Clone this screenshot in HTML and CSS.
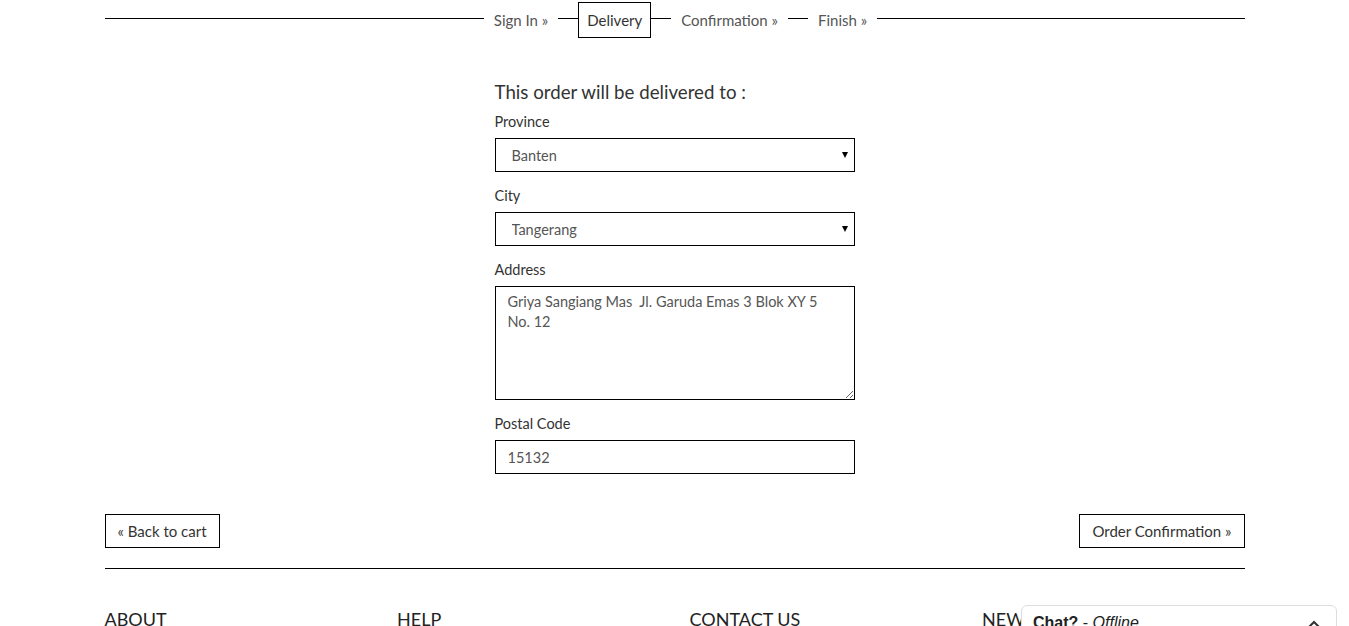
FILE: index.html
```html
<!DOCTYPE html>
<html lang="en">
<head>
    <meta charset="UTF-8">
    <meta name="viewport" content="width=device-width, initial-scale=1.0">
    <title>Checkout - Delivery</title>
    <link rel="stylesheet" href="styles.css">
</head>
<body>

<div class="container">
    <div class="steps">
        <span class="step-line"></span>
        <span class="step">Sign In &raquo;</span>
        <span class="step-line short"></span>
        <span class="step active">Delivery</span>
        <span class="step-line short"></span>
        <span class="step">Confirmation &raquo;</span>
        <span class="step-line short"></span>
        <span class="step">Finish &raquo;</span>
        <span class="step-line"></span>
    </div>

    <form class="delivery-form">
        <h3>This order will be delivered to :</h3>

        <label for="province">Province</label>
        <div class="select-wrap">
            <select id="province">
                <option>Banten</option>
            </select>
        </div>

        <label for="city">City</label>
        <div class="select-wrap">
            <select id="city">
                <option>Tangerang</option>
            </select>
        </div>

        <label for="address">Address</label>
        <textarea id="address" spellcheck="false">Griya Sangiang Mas  Jl. Garuda Emas 3 Blok XY 5 No. 12</textarea>

        <label for="postal">Postal Code</label>
        <input type="text" id="postal" value="15132">
    </form>

    <div class="actions">
        <button type="button" class="btn">&laquo; Back to cart</button>
        <button type="button" class="btn">Order Confirmation &raquo;</button>
    </div>

    <hr>

    <div class="footer">
        <h4>ABOUT</h4>
        <h4>HELP</h4>
        <h4>CONTACT US</h4>
        <h4>NEWSLETTER</h4>
    </div>
</div>

<div class="chat">
    <span><b>Chat?</b> - <i>Offline</i></span>
    <svg width="12" height="8" viewBox="0 0 12 8"><path d="M1 7 L6 2 L11 7" fill="none" stroke="#333" stroke-width="2"/></svg>
</div>

</body>
</html>
```

FILE: styles.css
```css
body {
    margin: 0;
    font-family: Lato, "Open Sans", sans-serif;
    color: #333;
    background: #fff;
    height: 626px;
    overflow: hidden;
}
.container {
    width: 1140px;
    margin: 0 auto;
}
.steps {
    display: flex;
    align-items: center;
    height: 38px;
    padding-top: 1px;
    font-size: 15px;
    color: #555;
}
.step-line {
    flex: 1 1 0;
    height: 1px;
    background: #000;
    margin: 0 10px 3px 0;
}
.step-line:first-child {
    flex-basis: 12px;
}
.step-line:last-child {
    margin: 0 0 3px 10px;
}
.step-line.short {
    flex: 0 0 20px;
    margin: 0 10px 3px;
}
.steps .step-line.short:nth-child(3) {
    margin-right: 0;
}
.step.active + .step-line.short {
    margin-left: 0;
}
.step.active {
    border: 1px solid #000;
    padding: 8px 8px;
    color: #333;
}
.delivery-form {
    width: 360px;
    margin: 0 auto;
}
.delivery-form h3 {
    font-weight: normal;
    font-size: 18.7px;
    margin: 42px 0 10px;
}
.delivery-form label {
    display: block;
    font-size: 14.5px;
    margin-bottom: 8px;
}
.select-wrap {
    position: relative;
    margin-bottom: 15px;
}
.select-wrap::after {
    content: "";
    position: absolute;
    right: 7px;
    top: 14px;
    border-left: 3px solid transparent;
    border-right: 3px solid transparent;
    border-top: 6px solid #000;
    pointer-events: none;
}
select, textarea, input[type="text"] {
    display: block;
    box-sizing: border-box;
    width: 360px;
    border: 1px solid #000;
    border-radius: 0;
    background: #fff;
    font-family: inherit;
    font-size: 14.5px;
    color: #555;
    outline: none;
}
select {
    height: 34px;
    padding: 0 16px;
    appearance: none;
    -webkit-appearance: none;
}
textarea {
    height: 114px;
    padding: 5px 12px;
    line-height: 20px;
    resize: vertical;
    margin-bottom: 15px;
}
input[type="text"] {
    height: 34px;
    padding: 0 12px;
}
.actions {
    display: flex;
    justify-content: space-between;
    margin-top: 40px;
}
.btn {
    background: #fff;
    border: 1px solid #000;
    height: 34px;
    padding: 0 12px;
    font-family: inherit;
    font-size: 15px;
    color: #333;
    cursor: pointer;
}
hr {
    border: none;
    border-top: 1px solid #000;
    margin: 20px 0 0;
}
.footer {
    display: grid;
    grid-template-columns: repeat(4, 1fr);
    gap: 30px;
    margin-top: 39px;
}
.footer h4 {
    margin: 0;
    font-weight: normal;
    font-size: 18px;
    color: #222;
}
.chat {
    position: fixed;
    left: 1021px;
    top: 605px;
    width: 316px;
    height: 40px;
    box-sizing: border-box;
    background: #fff;
    border: 1px solid #ddd;
    border-radius: 6px 6px 0 0;
    display: flex;
    justify-content: space-between;
    align-items: flex-start;
    padding: 8px 16px 0 11px;
    font-family: "Liberation Sans", Arial, sans-serif;
    font-size: 16px;
    color: #222;
}
.chat svg {
    margin-top: 6px;
}
```
